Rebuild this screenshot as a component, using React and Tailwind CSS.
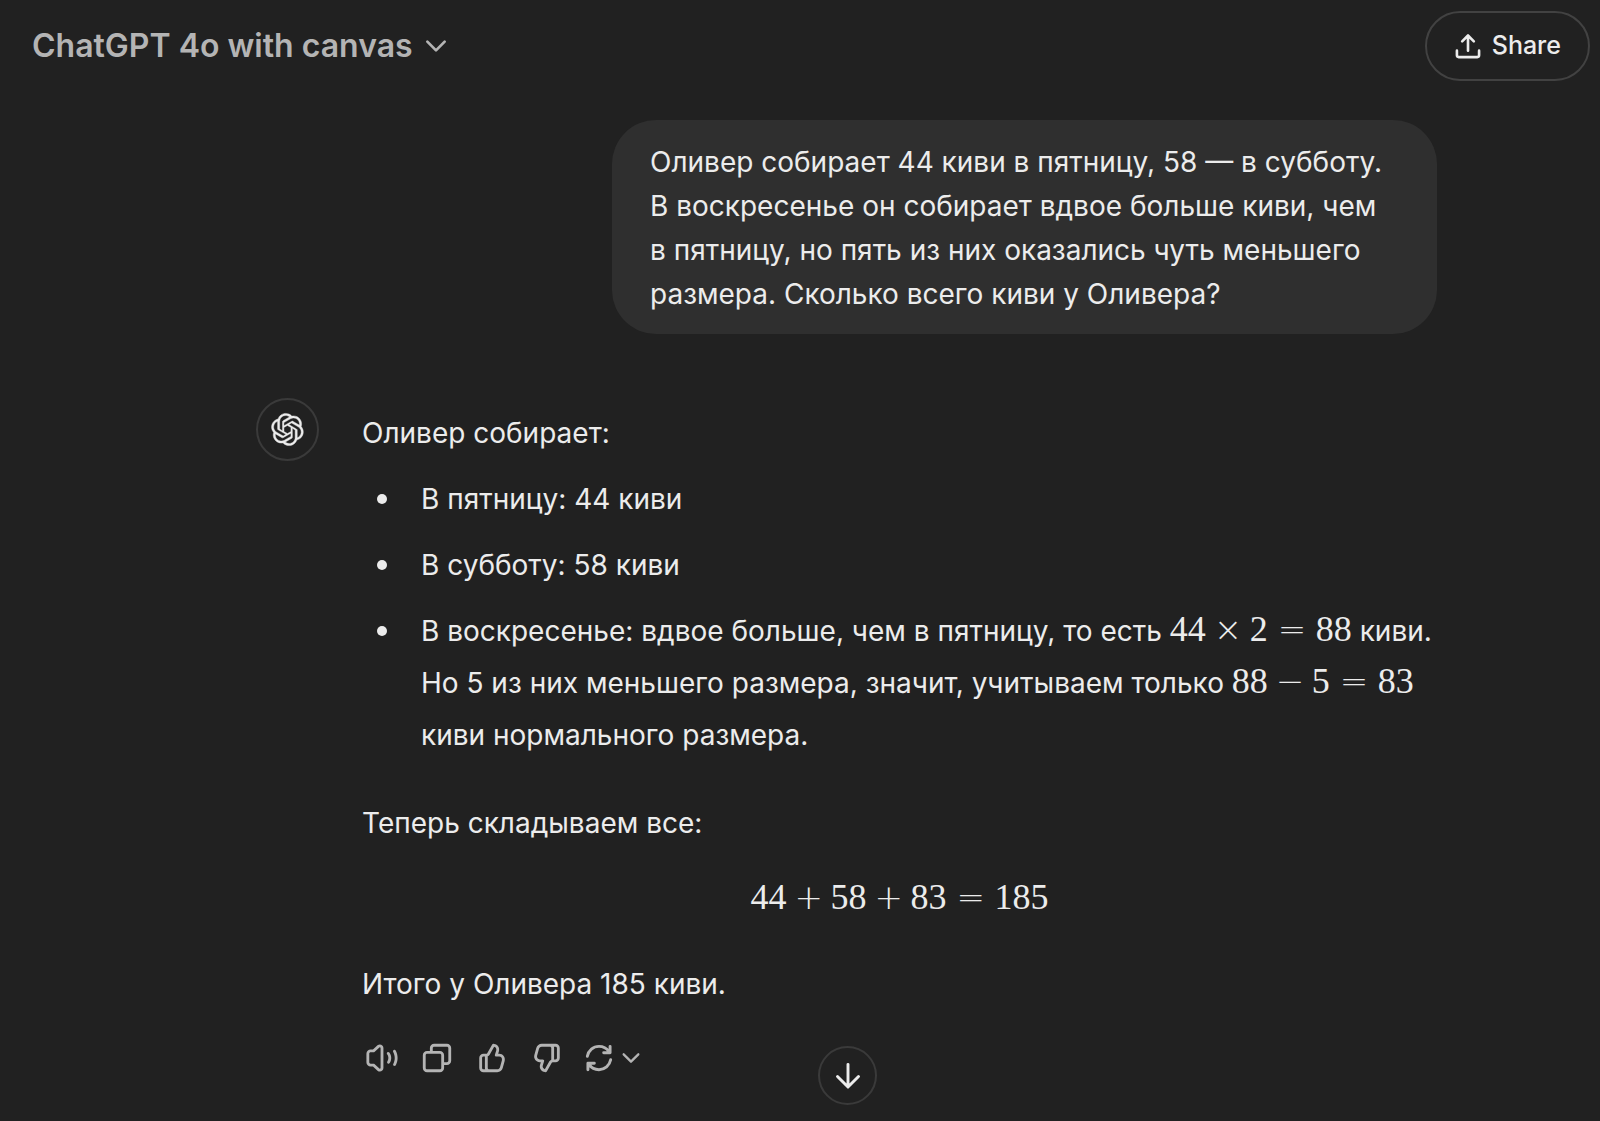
import React from 'react';

const iconPaths = {
  speaker:
    'M11 4.9099C11 4.47485 10.4828 4.24734 10.1621 4.54132L6.67572 7.7372C6.49129 7.90626 6.25019 8.00005 6 8.00005H4C3.44772 8.00005 3 8.44776 3 9.00005V15C3 15.5523 3.44772 16 4 16H6C6.25019 16 6.49129 16.0938 6.67572 16.2629L10.1621 19.4588C10.4828 19.7527 11 19.5252 11 19.0902V4.9099ZM8.81069 3.06701C10.4142 1.59714 13 2.73463 13 4.9099V19.0902C13 21.2655 10.4142 22.403 8.81069 20.9331L5.61102 18H4C2.34315 18 1 16.6569 1 15V9.00005C1 7.34319 2.34315 6.00005 4 6.00005H5.61102L8.81069 3.06701ZM20.3166 6.35665C20.8019 6.09313 21.409 6.27296 21.6725 6.75833C22.5191 8.3176 22.9996 10.1042 22.9996 12.0001C22.9996 13.8507 22.5418 15.5974 21.7323 17.1302C21.4744 17.6185 20.8695 17.8054 20.3811 17.5475C19.8927 17.2896 19.7059 16.6846 19.9638 16.1962C20.6249 14.9444 20.9996 13.5175 20.9996 12.0001C20.9996 10.4458 20.6064 8.98627 19.9149 7.71262C19.6514 7.22726 19.8312 6.62017 20.3166 6.35665ZM15.7994 7.90049C16.241 7.5688 16.8679 7.65789 17.1995 8.09947C18.0156 9.18593 18.4996 10.5379 18.4996 12.0001C18.4996 13.3127 18.1094 14.5372 17.4385 15.5604C17.1357 16.0222 16.5158 16.1511 16.0539 15.8483C15.5921 15.5455 15.4632 14.9255 15.766 14.4637C16.2298 13.7564 16.4996 12.9113 16.4996 12.0001C16.4996 10.9859 16.1653 10.0526 15.6004 9.30063C15.2687 8.85905 15.3578 8.23218 15.7994 7.90049Z',
  copy:
    'M7 5C7 3.34315 8.34315 2 10 2H19C20.6569 2 22 3.34315 22 5V14C22 15.6569 20.6569 17 19 17H17V19C17 20.6569 15.6569 22 14 22H5C3.34315 22 2 20.6569 2 19V10C2 8.34315 3.34315 7 5 7H7V5ZM9 7H14C15.6569 7 17 8.34315 17 10V15H19C19.5523 15 20 14.5523 20 14V5C20 4.44772 19.5523 4 19 4H10C9.44772 4 9 4.44772 9 5V7ZM5 9C4.44772 9 4 9.44772 4 10V19C4 19.5523 4.44772 20 5 20H14C14.5523 20 15 19.5523 15 19V10C15 9.44772 14.5523 9 14 9H5Z',
  thumbUp:
    'M12.1318 2.50389C12.3321 2.15338 12.7235 1.95768 13.124 2.00775L13.5778 2.06447C16.0449 2.37286 17.636 4.83353 16.9048 7.20993L16.354 8.99999H17.0722C19.7097 8.99999 21.6253 11.5079 20.9313 14.0525L19.5677 19.0525C19.0931 20.7927 17.5124 22 15.7086 22H6C4.34315 22 3 20.6568 3 19V12C3 10.3431 4.34315 8.99999 6 8.99999H8C8.25952 8.99999 8.49914 8.86094 8.6279 8.63561L12.1318 2.50389ZM10 20H15.7086C16.6105 20 17.4008 19.3964 17.6381 18.5262L19.0018 13.5262C19.3488 12.2539 18.391 11 17.0722 11H15C14.6827 11 14.3841 10.8494 14.1956 10.5941C14.0071 10.3388 13.9509 10.0092 14.0442 9.70591L14.9932 6.62175C15.3384 5.49984 14.6484 4.34036 13.5319 4.08468L10.3644 9.62789C10.0522 10.1742 9.56691 10.5859 9 10.8098V19C9 19.5523 9.44772 20 10 20ZM7 11V19C7 19.3506 7.06015 19.6872 7.17071 20H6C5.44772 20 5 19.5523 5 19V12C5 11.4477 5.44772 11 6 11H7Z',
  thumbDown:
    'M11.8727 21.4961C11.6725 21.8466 11.2811 22.0423 10.8805 21.9922L10.4267 21.9355C7.95958 21.6271 6.36855 19.1665 7.09975 16.7901L7.65054 15H6.93226C4.29476 15 2.37923 12.4921 3.0732 9.94753L4.43684 4.94753C4.91145 3.20728 6.49209 2 8.29589 2H18.0045C19.6614 2 21.0045 3.34315 21.0045 5V12C21.0045 13.6569 19.6614 15 18.0045 15H16.0045C15.745 15 15.5054 15.1391 15.3766 15.3644L11.8727 21.4961ZM14.0045 4H8.29589C7.39399 4 6.60367 4.60364 6.36637 5.47376L5.00273 10.4738C4.65574 11.746 5.61351 13 6.93226 13H9.00451C9.32185 13 9.62036 13.1506 9.8089 13.4059C9.99743 13.6612 10.0536 13.9908 9.96028 14.2941L9.01131 17.3782C8.6661 18.5002 9.35608 19.6596 10.4726 19.9153L13.6401 14.3721C13.9523 13.8258 14.4376 13.4141 15.0045 13.1902V5C15.0045 4.44772 14.5568 4 14.0045 4ZM17.0045 13V5C17.0045 4.64937 16.9444 4.31278 16.8338 4H18.0045C18.5568 4 19.0045 4.44772 19.0045 5V12C19.0045 12.5523 18.5568 13 18.0045 13H17.0045Z',
};

const logoPath =
  'M37.5324 16.8707C37.9808 15.5241 38.1363 14.0974 37.9886 12.6859C37.8409 11.2744 37.3934 9.91076 36.676 8.68622C35.6126 6.83404 33.9882 5.3676 32.0373 4.4985C30.0864 3.62941 27.9098 3.40259 25.8215 3.85078C24.8796 2.7893 23.7219 1.94125 22.4257 1.36341C21.1295 0.785575 19.7249 0.491269 18.3058 0.500197C16.1708 0.495044 14.0893 1.16803 12.3614 2.42214C10.6335 3.67624 9.34853 5.44666 8.6917 7.47815C7.30085 7.76286 5.98686 8.3414 4.8377 9.17505C3.68854 10.0087 2.73073 11.0782 2.02839 12.312C0.956464 14.1591 0.498905 16.2988 0.721698 18.4228C0.944492 20.5467 1.83612 22.5449 3.268 24.1293C2.81966 25.4759 2.66413 26.9026 2.81182 28.3141C2.95951 29.7256 3.40701 31.0892 4.12437 32.3138C5.18791 34.1659 6.8123 35.6322 8.76321 36.5013C10.7141 37.3704 12.8907 37.5973 14.9789 37.1492C15.9208 38.2107 17.0786 39.0587 18.3747 39.6366C19.6709 40.2144 21.0755 40.5087 22.4946 40.4998C24.6307 40.5054 26.7133 39.8321 28.4418 38.5772C30.1704 37.3223 31.4556 35.5506 32.1119 33.5179C33.5027 33.2332 34.8167 32.6547 35.9659 31.821C37.115 30.9874 38.0728 29.9178 38.7752 28.684C39.8458 26.8371 40.3023 24.6979 40.0789 22.5748C39.8556 20.4517 38.9639 18.4544 37.5324 16.8707ZM22.4978 37.8849C20.7443 37.8874 19.0459 37.2733 17.6994 36.1501C17.7601 36.117 17.8666 36.0586 17.936 36.0161L25.9004 31.4156C26.1003 31.3019 26.2663 31.137 26.3813 30.9378C26.4964 30.7386 26.5563 30.5124 26.5549 30.2825V19.0542L29.9213 20.998C29.9389 21.0068 29.9541 21.0198 29.9656 21.0359C29.977 21.052 29.9842 21.0707 29.9867 21.0902V30.3889C29.9842 32.375 29.1946 34.2791 27.7909 35.6841C26.3872 37.0892 24.4838 37.8806 22.4978 37.8849ZM6.39227 31.0064C5.51397 29.4888 5.19742 27.7107 5.49804 25.9832C5.55718 26.0187 5.66048 26.0818 5.73461 26.1244L13.699 30.7248C13.8975 30.8408 14.1233 30.902 14.3532 30.902C14.583 30.902 14.8088 30.8408 15.0073 30.7248L24.731 25.1103V28.9979C24.7321 29.0177 24.7283 29.0376 24.7199 29.0556C24.7115 29.0736 24.6988 29.0893 24.6829 29.1012L16.6317 33.7497C14.9096 34.7416 12.8643 35.0097 10.9447 34.4954C9.02506 33.9811 7.38785 32.7263 6.39227 31.0064ZM4.29707 13.6194C5.17156 12.0998 6.55279 10.9364 8.19885 10.3327C8.19885 10.4013 8.19491 10.5228 8.19491 10.6071V19.808C8.19351 20.0378 8.25334 20.2638 8.36823 20.4629C8.48312 20.6619 8.64893 20.8267 8.84863 20.9404L18.5723 26.5542L15.206 28.4979C15.1894 28.5089 15.1703 28.5155 15.1505 28.5173C15.1307 28.5191 15.1107 28.516 15.0924 28.5082L7.04046 23.8557C5.32135 22.8601 4.06716 21.2235 3.55289 19.3046C3.03862 17.3858 3.30624 15.3413 4.29707 13.6194ZM31.955 20.0556L22.2312 14.4411L25.5976 12.4981C25.6142 12.4872 25.6333 12.4805 25.6531 12.4787C25.6729 12.4769 25.6928 12.4801 25.7111 12.4879L33.7631 17.1364C34.9967 17.849 36.0017 18.8982 36.6606 20.1613C37.3194 21.4244 37.6047 22.849 37.4832 24.2684C37.3617 25.6878 36.8382 27.0432 35.9743 28.1759C35.1103 29.3086 33.9415 30.1717 32.6047 30.6641C32.6047 30.5947 32.6047 30.4733 32.6047 30.3889V21.188C32.6066 20.9586 32.5474 20.7328 32.4332 20.5338C32.319 20.3348 32.154 20.1698 31.955 20.0556ZM35.3055 15.0128C35.2464 14.9765 35.1431 14.9142 35.069 14.8717L27.1045 10.2712C26.906 10.1554 26.6803 10.0943 26.4504 10.0943C26.2206 10.0943 25.9948 10.1554 25.7963 10.2712L16.0726 15.8858V11.9982C16.0715 11.9783 16.0753 11.9585 16.0837 11.9405C16.0921 11.9225 16.1048 11.9068 16.1207 11.8949L24.1719 7.25025C25.4053 6.53903 26.8158 6.19376 28.2383 6.25482C29.6608 6.31589 31.0364 6.78077 32.2044 7.59508C33.3723 8.40939 34.2842 9.53945 34.8334 10.8531C35.3826 12.1667 35.5464 13.6095 35.3055 15.0128ZM14.2424 21.9419L10.8752 19.9981C10.8576 19.9893 10.8423 19.9763 10.8309 19.9602C10.8195 19.9441 10.8122 19.9254 10.8098 19.9058V10.6071C10.8107 9.18295 11.2173 7.78848 11.9819 6.58696C12.7466 5.38544 13.8377 4.42659 15.1275 3.82264C16.4173 3.21869 17.8524 2.99464 19.2649 3.1767C20.6775 3.35876 22.0089 3.93941 23.1034 4.85067C23.0427 4.88379 22.937 4.94215 22.8668 4.98473L14.9024 9.58517C14.7025 9.69878 14.5366 9.86356 14.4215 10.0626C14.3065 10.2616 14.2466 10.4877 14.2479 10.7175L14.2424 21.9419ZM16.071 17.9991L20.4018 15.4978L24.7325 17.9975V22.9985L20.4018 25.4983L16.071 22.9985V17.9991Z';

const CHEVRON = 'M4 8l8 8 8-8';

const SolidIcon = ({ name }) => (
  <svg className="w-[34px] h-[34px]" viewBox="0 0 24 24" fill="currentColor" fillRule="evenodd">
    <path d={iconPaths[name]} />
  </svg>
);

const LineIcon = ({ d, className, strokeWidth = 2 }) => (
  <svg
    className={className}
    viewBox="0 0 24 24"
    fill="none"
    stroke="currentColor"
    strokeWidth={strokeWidth}
    strokeLinecap="round"
    strokeLinejoin="round"
  >
    <path d={d} />
  </svg>
);

const operatorClass =
  "inline-block w-7 text-center text-[34px] leading-none font-['DejaVu_Sans',sans-serif] font-extralight";

// Renders a formula like "44 + 58 = 102" with TeX-like spacing around the operators
const Formula = ({ children }) => (
  <span className="font-['Liberation_Serif',serif] text-4xl leading-none whitespace-nowrap">
    {children.split(' ').map((token, i) => {
      if (/\d/.test(token)) return <span key={i}>{token}</span>;
      return (
        <span key={i} className={`${operatorClass} ${token === '=' ? 'mx-[10px]' : 'mx-2'}`}>
          {token}
        </span>
      );
    })}
  </span>
);

const Header = () => (
  <header className="flex items-center justify-between pl-8 pr-[10px] pt-[11px]">
    <button className="flex items-center gap-[10px] text-[32px] font-semibold text-[#b4b4b4]">
      ChatGPT 4o with canvas
      <LineIcon d={CHEVRON} className="w-[26px] h-[26px]" strokeWidth={2.5} />
    </button>
    <button className="flex items-center gap-[10px] h-[70px] px-[27px] rounded-full border-2 border-[#424242] text-[25px] font-medium text-[#ececec]">
      <LineIcon
        d="M12 16V3M7 8l5-5 5 5M2.500 16v4a1.500 1.500 0 0 0 1.500 1.500h16a1.500 1.500 0 0 0 1.500-1.500v-4"
        className="w-7 h-7"
        strokeWidth={2.25}
      />
      Share
    </button>
  </header>
);

const UserMessage = () => (
  <div className="flex justify-end mt-[39px]">
    <p className="w-[825px] px-[38px] pt-5 pb-[18px] rounded-[44px] bg-[#2f2f2f] leading-[44px]">
      Оливер собирает 44 киви в пятницу, 58 — в субботу.
      <br />
      В воскресенье он собирает вдвое больше киви, чем
      <br />
      в пятницу, но пять из них оказались чуть меньшего
      <br />
      размера. Сколько всего киви у Оливера?
    </p>
  </div>
);

const Bullet = ({ children }) => (
  <li className="flex mt-[14px]">
    <span className="flex items-center w-[59px] h-[51px] pl-[15px] shrink-0">
      <span className="w-[10px] h-[10px] rounded-full bg-[#ececec]" />
    </span>
    <span>{children}</span>
  </li>
);

const Actions = () => (
  <div className="flex items-center gap-[21px] pl-[3px] mt-[31px] text-[#b4b4b4]">
    <button aria-label="Read aloud"><SolidIcon name="speaker" /></button>
    <button aria-label="Copy"><SolidIcon name="copy" /></button>
    <button aria-label="Good response"><SolidIcon name="thumbUp" /></button>
    <button aria-label="Bad response"><SolidIcon name="thumbDown" /></button>
    <button aria-label="Try again" className="flex items-center gap-[7px]">
      <LineIcon
        className="w-7 h-7"
        strokeWidth={2.5}
        d="M2 10.500C3 5.500 7 2 12 2c3.500 0 6.500 1.500 8.500 4.500M21.500 2v5.500H16M22 13.500C21 18.500 17 22 12 22c-3.500 0-6.500-1.500-8.500-4.500M2.500 22v-5.500H8"
      />
      <LineIcon d={CHEVRON} className="w-[22px] h-[22px]" strokeWidth={2.5} />
    </button>
  </div>
);

const AssistantMessage = () => (
  <div className="flex mt-16">
    <div className="flex items-center justify-center w-[63px] h-[63px] mr-[43px] shrink-0 rounded-full border-2 border-[#3a3a3a]">
      <svg className="w-[33px] h-[33px] overflow-visible" viewBox="0 0 41 41" fill="currentColor" stroke="currentColor" strokeWidth="0.5">
        <path d={logoPath} />
      </svg>
    </div>
    <div className="flex-1 pt-[9px] leading-[52px]">
      <p>Оливер собирает:</p>
      <ul>
        <Bullet>В пятницу: 44 киви</Bullet>
        <Bullet>В субботу: 58 киви</Bullet>
        <Bullet>
          В воскресенье: вдвое больше, чем в пятницу, то есть <Formula>44 × 2 = 88</Formula> киви.
          <br />
          Но 5 из них меньшего размера, значит, учитываем только <Formula>88 − 5 = 83</Formula>
          <br />
          киви нормального размера.
        </Bullet>
      </ul>
      <p className="mt-9">Теперь складываем все:</p>
      <p className="mt-6 text-center">
        <Formula>44 + 58 + 83 = 185</Formula>
      </p>
      <p className="mt-[33px]">Итого у Оливера 185 киви.</p>
      <Actions />
    </div>
  </div>
);

export default function App() {
  return (
    <div className="min-h-screen bg-[#212121] text-[#ececec] text-[28px] font-['Inter',sans-serif]">
      <Header />
      <main className="relative pl-64 pr-[163px] pb-10">
        <UserMessage />
        <AssistantMessage />
        <div className="absolute inset-x-0 bottom-[10px] flex justify-center pl-64 pr-[161px]">
          <button
            aria-label="Scroll to bottom"
            className="flex items-center justify-center w-[59px] h-[59px] rounded-full border-2 border-[#3a3a3a] bg-[#212121]"
          >
            <LineIcon d="M12 2v19M3 12.500l9 9 9-9" className="w-7 h-7" strokeWidth={2.5} />
          </button>
        </div>
      </main>
    </div>
  );
}
